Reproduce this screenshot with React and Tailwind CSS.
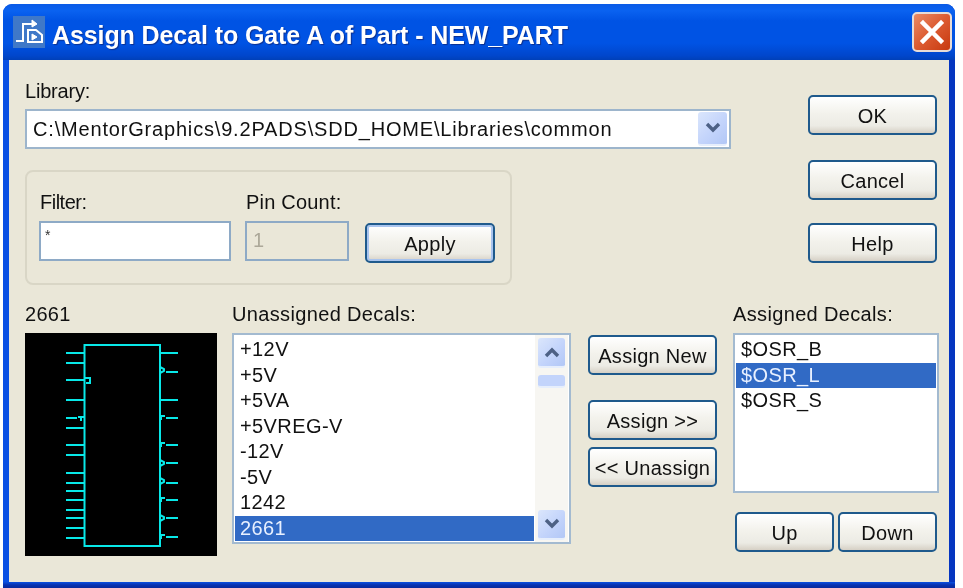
import React from 'react'

const font = "font-['Liberation_Sans',sans-serif]"

function XpButton({ label, className = '', focused = false }) {
  return (
    <button className={`h-[40px] rounded-[5px] border-2 border-[#1f5a8c] bg-[linear-gradient(180deg,#ffffff_0%,#f3f2ec_45%,#ecebe4_80%,#d6d0c5_100%)] pt-[1px] text-[20px] leading-none tracking-[0.3px] text-[#111] ${focused ? 'shadow-[inset_0_0_0_2px_#a9c4ee]' : ''} ${className}`}>
      {label}
    </button>
  )
}

function Chevron({ up = false }) {
  return (
    <svg width="18" height="12" viewBox="0 0 18 12" fill="none">
      <path d={up ? 'M3 10 L9 4 L15 10' : 'M3 2 L9 8 L15 2'} stroke="#4d6185" strokeWidth="3.4" />
    </svg>
  )
}

function ScrollButton({ up = false, className = '' }) {
  return (
    <div className={`flex items-center justify-center rounded-[3px] border-b-2 border-b-[#e6eefc] bg-[linear-gradient(135deg,#dbe6fc_0%,#c3d4fb_55%,#b2c7f6_100%)] ${className}`}>
      <Chevron up={up} />
    </div>
  )
}

function ListRow({ text, selected = false }) {
  return (
    <div className={`h-[25.5px] pl-[5px] text-[20px] leading-[25.5px] tracking-[0.4px] ${selected ? 'bg-[#316ac5] text-[#e8f0ff]' : 'text-[#111]'}`}>
      {text}
    </div>
  )
}

function DecalPreview() {
  const left = [353, 363, 380, 400, 418, 428, 445, 455, 473, 483, 491, 500, 510, 518, 528, 538]
  const rightFull = [353, 400]
  const rightGap = [372, 418, 445, 463, 483, 500, 518, 537]
  const bubbles = [370, 463, 481, 518]
  const ticks = [417, 444, 499, 536]
  return (
    <svg width="192" height="223" viewBox="25 333 192 223" className="block bg-black">
      <g stroke="#08e8e8" strokeWidth="2" fill="none">
        <rect x="84.5" y="345" width="75.5" height="201" />
        {left.map((y) => (
          <path key={y} d={y === 418 ? `M66 ${y}H77` : `M66 ${y}H84`} />
        ))}
        {rightFull.map((y) => (
          <path key={y} d={`M160 ${y}H178`} />
        ))}
        {rightGap.map((y) => (
          <path key={y} d={`M166 ${y}H178`} />
        ))}
        {bubbles.map((y) => (
          <path key={y} d={`M160 ${y - 3}L164 ${y - 1}L164 ${y + 1}L160 ${y + 3}`} />
        ))}
        {ticks.map((y) => (
          <path key={y} d={`M160 ${y - 1}H165M161 ${y}V${y + 3}`} />
        ))}
        <path d="M85 378H90V383H86M90 381H91" />
        <path d="M78 417H84M81 417V421" />
      </g>
    </svg>
  )
}

function AppIcon() {
  return (
    <div className="flex h-[32px] w-[32px] shrink-0 items-center justify-center bg-[#3f78c8]">
      <svg width="30" height="30" viewBox="0 0 30 30" fill="none" stroke="#ffffff">
        <path d="M2 24H9V7H18" strokeWidth="2" />
        <path d="M18 3L23 7L18 10Z" fill="#ffffff" strokeWidth="1" />
        <path d="M14 13H22L28 18V25H14Z" strokeWidth="2" />
        <path d="M18 17V23L23 20Z" fill="#ffffff" strokeWidth="1" />
      </svg>
    </div>
  )
}

export default function App() {
  return (
    <div className={`h-[588px] w-[963px] overflow-hidden bg-white pl-[3px] pt-[4px] blur-[0.6px] ${font}`}>
      <div className="flex h-[584px] w-[952px] flex-col rounded-t-[9px] bg-[linear-gradient(90deg,#0a50e4_0%,#0a50e0_60%,#0535c0_100%)]">
        <div className="flex h-[56px] shrink-0 items-center rounded-t-[9px] bg-[linear-gradient(180deg,#0a5ae6_0%,#0a62f0_12%,#0053e4_30%,#0053e4_70%,#0046cc_92%,#0040b8_100%)] pl-[10px] pr-[3px]">
          <AppIcon />
          <div className="ml-[7px] pt-[7px] text-[25px] font-bold leading-none tracking-[-0.1px] text-white [text-shadow:1px_1px_1px_#0b2f8f]">
            Assign Decal to Gate A of Part - NEW_PART
          </div>
          <div className="ml-auto flex h-[40px] w-[40px] items-center justify-center rounded-[5px] border-2 border-[#e8dcd6] bg-[linear-gradient(135deg,#e98a66_0%,#dc5a30_50%,#c73a10_100%)]">
            <svg width="26" height="26" viewBox="0 0 26 26">
              <path d="M4 4L22 22M22 4L4 22" stroke="#ffffff" strokeWidth="4.5" strokeLinecap="square" />
            </svg>
          </div>
        </div>

        <div className="mx-[6px] flex h-[522px] flex-col bg-[#eae7d8] pl-[16px]">
          <div className="flex h-[243px] shrink-0">
            <div className="w-[706px] pt-[20px]">
              <div className="h-[29px] text-[20px] leading-[22px] tracking-[-0.2px] text-[#111]">Library:</div>
              <div className="flex h-[40px] items-center border-2 border-[#9db5cc] bg-white pl-[6px] pr-[2px]">
                <span className="text-[20px] tracking-[0.82px] text-[#111]">C:\MentorGraphics\9.2PADS\SDD_HOME\Libraries\common</span>
                <ScrollButton className="ml-auto h-[34px] w-[29px]" />
              </div>
              <div className="mt-[21px] flex h-[115px] w-[487px] items-start rounded-[8px] border-2 border-[#d9d6c6] pl-[12px] pt-[19px]">
                <div className="w-[192px]">
                  <div className="h-[30px] pl-[1px] text-[20px] leading-[22px] tracking-[-0.5px] text-[#111]">Filter:</div>
                  <div className="h-[40px] border-2 border-[#8eaac6] bg-white pl-[4px] text-[14px] leading-[24px] text-[#333]">*</div>
                </div>
                <div className="ml-[14px] w-[104px]">
                  <div className="h-[30px] whitespace-nowrap pl-[1px] text-[20px] leading-[22px] tracking-[0.2px] text-[#111]">Pin Count:</div>
                  <div className="h-[40px] border-2 border-[#8eaac6] pl-[6px] text-[20px] leading-[34px] text-[#aca899]">1</div>
                </div>
                <XpButton label="Apply" focused className="ml-[16px] mt-[32px] w-[130px]" />
              </div>
            </div>
            <div className="ml-[77px] flex w-[129px] flex-col pt-[35px]">
              <XpButton label="OK" />
              <XpButton label="Cancel" className="mt-[25px]" />
              <XpButton label="Help" className="mt-[23px]" />
            </div>
          </div>

          <div className="flex">
            <div className="w-[192px]">
              <div className="h-[30px] text-[20px] leading-[22px] tracking-[0.3px] text-[#111]">2661</div>
              <DecalPreview />
            </div>
            <div className="ml-[15px] w-[339px]">
              <div className="h-[30px] text-[20px] leading-[22px] tracking-[0.35px] text-[#111]">Unassigned Decals:</div>
              <div className="flex h-[211px] border-2 border-[#a3bad0] bg-white pl-[1px] pt-[2px]">
                <div className="w-[299px] shrink-0">
                  {['+12V', '+5V', '+5VA', '+5VREG-V', '-12V', '-5V', '1242'].map((t) => (
                    <ListRow key={t} text={t} />
                  ))}
                  <ListRow text="2661" selected />
                </div>
                <div className="-mt-[2px] ml-[1px] flex w-[33px] flex-col bg-[#f7f6f2] px-[3px] pb-[2px] pt-[3px]">
                  <ScrollButton up className="h-[30px] shrink-0" />
                  <div className="mt-[7px] h-[13px] shrink-0 rounded-[3px] border-b-2 border-b-[#e6eefc] bg-[#c3d4fb]" />
                  <ScrollButton className="mt-auto h-[30px] shrink-0" />
                </div>
              </div>
            </div>
            <div className="ml-[17px] flex w-[129px] flex-col pt-[32px]">
              <XpButton label="Assign New" />
              <XpButton label="Assign >>" className="mt-[25px]" />
              <XpButton label="<< Unassign" className="mt-[7px]" />
            </div>
            <div className="ml-[16px] w-[206px]">
              <div className="h-[30px] whitespace-nowrap text-[20px] leading-[22px] tracking-[0.35px] text-[#111]">Assigned Decals:</div>
              <div className="h-[160px] border-2 border-[#a3bad0] bg-white px-[1px] pt-[2px]">
                <ListRow text="$OSR_B" />
                <ListRow text="$OSR_L" selected />
                <ListRow text="$OSR_S" />
              </div>
              <div className="mt-[19px] flex pl-[2px]">
                <XpButton label="Up" className="w-[99px]" />
                <XpButton label="Down" className="ml-[4px] w-[99px]" />
              </div>
            </div>
          </div>
        </div>
        <div className="h-[6px] shrink-0 bg-[linear-gradient(180deg,#0a50e0_0%,#0832b0_50%,#082a9c_100%)]" />
      </div>
    </div>
  )
}
